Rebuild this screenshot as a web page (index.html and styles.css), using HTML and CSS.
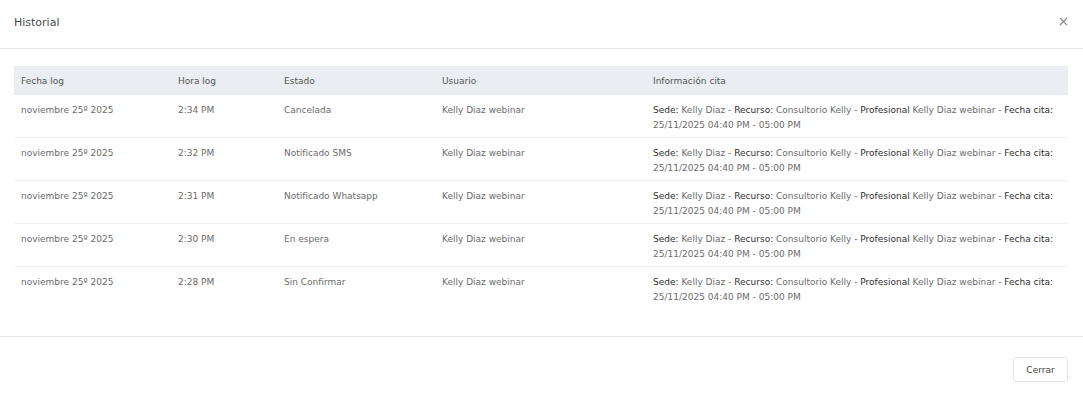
FILE: index.html
```html
<!DOCTYPE html>
<html lang="es">
<head>
  <meta charset="UTF-8">
  <title>Historial</title>
  <link rel="stylesheet" href="styles.css">
</head>
<body>
  <div class="modal">
    <div class="modal-header">
      <h3>Historial</h3>
      <button class="close-btn" aria-label="Cerrar">
        <svg width="9" height="9" viewBox="0 0 9 9"><path d="M1 1L8 8M8 1L1 8" stroke="#8a8a8a" stroke-width="1.2" fill="none"/></svg>
      </button>
    </div>
    <div class="modal-body">
      <table class="log-table">
        <thead>
          <tr>
            <th class="c-fecha">Fecha log</th>
            <th class="c-hora">Hora log</th>
            <th class="c-estado">Estado</th>
            <th class="c-usuario">Usuario</th>
            <th>Información cita</th>
          </tr>
        </thead>
        <tbody>
          <tr>
            <td>noviembre 25º 2025</td>
            <td>2:34 PM</td>
            <td>Cancelada</td>
            <td>Kelly Diaz webinar</td>
            <td><b>Sede:</b> Kelly Diaz - <b>Recurso:</b> Consultorio Kelly - <b>Profesional</b> Kelly Diaz webinar - <b>Fecha cita:</b> 25/11/2025 04:40 PM - 05:00 PM</td>
          </tr>
          <tr>
            <td>noviembre 25º 2025</td>
            <td>2:32 PM</td>
            <td>Notificado SMS</td>
            <td>Kelly Diaz webinar</td>
            <td><b>Sede:</b> Kelly Diaz - <b>Recurso:</b> Consultorio Kelly - <b>Profesional</b> Kelly Diaz webinar - <b>Fecha cita:</b> 25/11/2025 04:40 PM - 05:00 PM</td>
          </tr>
          <tr>
            <td>noviembre 25º 2025</td>
            <td>2:31 PM</td>
            <td>Notificado Whatsapp</td>
            <td>Kelly Diaz webinar</td>
            <td><b>Sede:</b> Kelly Diaz - <b>Recurso:</b> Consultorio Kelly - <b>Profesional</b> Kelly Diaz webinar - <b>Fecha cita:</b> 25/11/2025 04:40 PM - 05:00 PM</td>
          </tr>
          <tr>
            <td>noviembre 25º 2025</td>
            <td>2:30 PM</td>
            <td>En espera</td>
            <td>Kelly Diaz webinar</td>
            <td><b>Sede:</b> Kelly Diaz - <b>Recurso:</b> Consultorio Kelly - <b>Profesional</b> Kelly Diaz webinar - <b>Fecha cita:</b> 25/11/2025 04:40 PM - 05:00 PM</td>
          </tr>
          <tr>
            <td>noviembre 25º 2025</td>
            <td>2:28 PM</td>
            <td>Sin Confirmar</td>
            <td>Kelly Diaz webinar</td>
            <td><b>Sede:</b> Kelly Diaz - <b>Recurso:</b> Consultorio Kelly - <b>Profesional</b> Kelly Diaz webinar - <b>Fecha cita:</b> 25/11/2025 04:40 PM - 05:00 PM</td>
          </tr>
        </tbody>
      </table>
    </div>
    <div class="modal-footer">
      <button class="btn-cerrar">Cerrar</button>
    </div>
  </div>
</body>
</html>
```

FILE: styles.css
```css
body {
  margin: 0;
  padding: 0;
  font-family: 'DejaVu Sans', sans-serif;
  background: #fff;
  color: #6b6b6b;
}

.modal {
  width: 1083px;
  background: #fff;
}

.modal-header {
  display: flex;
  align-items: center;
  justify-content: space-between;
  padding: 0 15px 0 14px;
  border-bottom: 1px solid #e6e8ec;
  box-sizing: border-box;
  height: 49px;
}

.modal-header h3 {
  margin: 0;
  font-size: 11px;
  font-weight: normal;
  color: #4a4a4a;
  padding-bottom: 4px;
}

.close-btn {
  border: none;
  background: none;
  padding: 0;
  margin-bottom: 6px;
  cursor: pointer;
  display: flex;
}

.modal-body {
  padding: 17px 15px 26px 14px;
  border-bottom: 1px solid #e6e8ec;
}

.log-table {
  width: 100%;
  border-collapse: collapse;
  font-size: 9px;
  table-layout: fixed;
}

.log-table th {
  background: #ebedf2;
  text-align: left;
  font-weight: normal;
  color: #555;
  height: 29px;
  padding: 0 7px;
}

.c-fecha { width: 143px; }
.c-hora { width: 92px; }
.c-estado { width: 144px; }
.c-usuario { width: 197px; }

.log-table td {
  vertical-align: top;
  padding: 8px 7px 4px;
  height: 30px;
  line-height: 15px;
  border-bottom: 1px solid #f0f1f3;
}

.log-table tbody tr:last-child td {
  border-bottom: none;
  padding-bottom: 5px;
}

.log-table td b {
  font-weight: normal;
  color: #2e2e2e;
}

.modal-footer {
  display: flex;
  justify-content: flex-end;
  padding: 20px 15px 17px;
}

.btn-cerrar {
  font-family: inherit;
  font-size: 9px;
  color: #444;
  background: #fff;
  border: 1px solid #e3e5e8;
  border-radius: 3px;
  width: 55px;
  height: 25px;
  cursor: pointer;
}
```
